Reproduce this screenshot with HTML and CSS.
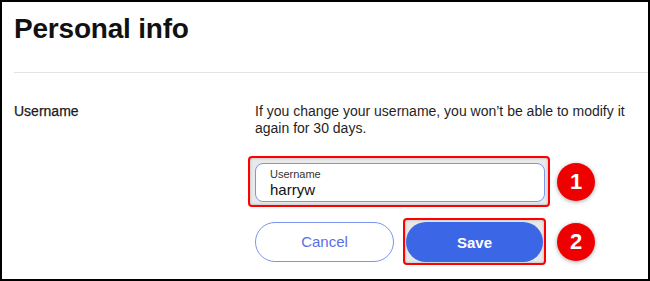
FILE: index.html
```html
<!DOCTYPE html>
<html>
<head>
<meta charset="utf-8">
<link rel="stylesheet" href="styles.css">
</head>
<body>
<div class="frame">
  <h1 class="title">Personal info</h1>
  <div class="divider"></div>
  <div class="row">
    <div class="label">Username</div>
    <div class="content">
      <p class="desc">If you change your username, you won’t be able to modify it again for 30 days.</p>
      <div class="line">
        <div class="mark mark-input">
          <div class="field">
            <span class="field-label">Username</span>
            <span class="field-value">harryw</span>
          </div>
        </div>
        <div class="badge badge-1">1</div>
      </div>
      <div class="line line-buttons">
        <button class="btn btn-cancel">Cancel</button>
        <div class="mark mark-save">
          <button class="btn btn-save">Save</button>
        </div>
        <div class="badge badge-2">2</div>
      </div>
    </div>
  </div>
</div>
</body>
</html>
```
FILE: styles.css
```css
* { box-sizing: border-box; }
html, body { margin: 0; padding: 0; background: #fff; }
body { font-family: "Liberation Sans", Arial, sans-serif; color: #222; }
.frame {
  width: 650px;
  height: 281px;
  border: 2px solid #000;
  overflow: hidden;
  background: #fff;
}
.title {
  margin: 10px 0 0 12px;
  font-size: 28px;
  line-height: 34px;
  font-weight: 700;
  color: #111;
  letter-spacing: -0.2px;
}
.divider {
  margin: 26px 0 0 12px;
  height: 1px;
  background: #e3e3e3;
}
.row {
  display: grid;
  grid-template-columns: 241px 1fr;
  margin-top: 30px;
  padding-left: 12px;
}
.label {
  font-size: 14px;
  line-height: 17px;
  color: #1a1a1a;
  -webkit-text-stroke: 0.25px #1a1a1a;
}
.desc {
  margin: 0;
  font-size: 14px;
  line-height: 17px;
  color: #1f1f1f;
  max-width: 385px;
}
.line {
  display: flex;
  align-items: center;
}
.mark {
  border: 2px solid #f00;
  border-radius: 4px;
  background: #e9e9e9;
  box-shadow: inset 0 0 3px rgba(0,0,0,0.25);
}
.mark-input {
  margin: 19px 0 0 -7px;
  padding: 5px 3px 3px 5px;
  width: 302px;
}
.field {
  height: 39px;
  border: 1px solid #7b95ee;
  border-radius: 8px;
  background: #fff;
  padding: 3px 14px 0 14px;
  display: flex;
  flex-direction: column;
}
.field-label {
  font-size: 11px;
  line-height: 14px;
  color: #333;
}
.field-value {
  font-size: 15px;
  line-height: 18px;
  color: #111;
}
.badge {
  width: 38px;
  height: 38px;
  border-radius: 50%;
  background: #ee0000;
  color: #fff;
  font-weight: 700;
  font-size: 22px;
  display: flex;
  align-items: center;
  justify-content: center;
  box-shadow: 0 1px 4px rgba(0,0,0,0.35);
}
.badge-1 { margin: 19px 0 0 7px; }
.line-buttons { margin-top: 11px; }
.btn {
  font-family: "Liberation Sans", Arial, sans-serif;
  font-size: 15px;
  height: 40px;
  border-radius: 20px;
  cursor: pointer;
}
.btn-cancel {
  width: 139px;
  background: #fff;
  border: 1.5px solid #7b95ee;
  color: #5a6fe6;
}
.mark-save {
  margin-left: 9px;
  padding: 2px 1px 1px 1px;
  width: 143px;
}
.btn-save {
  display: block;
  width: 137px;
  background: #3b66e6;
  border: none;
  color: #fff;
  font-weight: 700;
}
.badge-2 { margin-left: 11px; }
```
